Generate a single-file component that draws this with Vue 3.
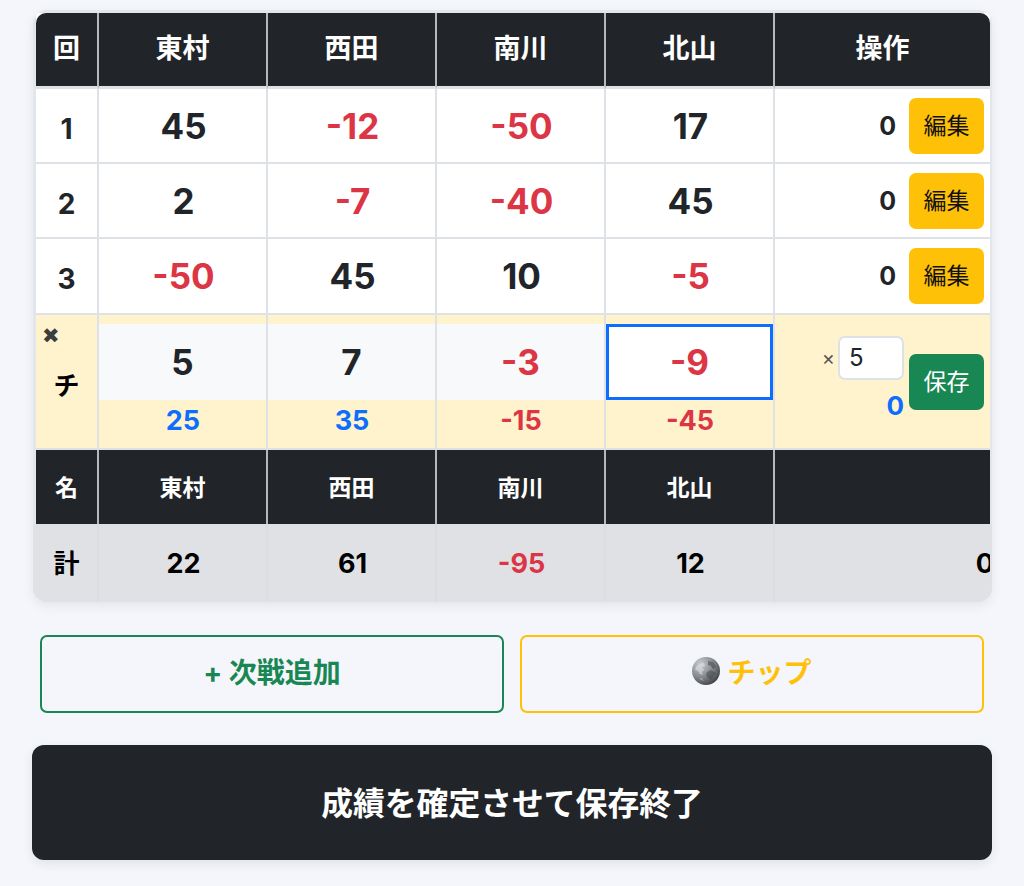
<script setup>
const players = ['東村', '西田', '南川', '北山']

const rounds = [
  { no: 1, scores: [45, -12, -50, 17], chip: 0 },
  { no: 2, scores: [2, -7, -40, 45], chip: 0 },
  { no: 3, scores: [-50, 45, 10, -5], chip: 0 },
]

const chips = [
  { value: 5, amount: 25 },
  { value: 7, amount: 35 },
  { value: -3, amount: -15 },
  { value: -9, amount: -45, active: true },
]

const totals = [22, 61, -95, 12]
</script>

<template>
  <div class="page">
    <div class="score-card">
      <table class="score-table">
        <colgroup>
          <col class="col-round" />
          <col v-for="p in players" :key="p" class="col-player" />
          <col class="col-ops" />
        </colgroup>
        <thead>
          <tr>
            <th class="head-main">回</th>
            <th v-for="p in players" :key="p" class="head-main">{{ p }}</th>
            <th class="head-main">操作</th>
          </tr>
        </thead>
        <tbody>
          <tr v-for="r in rounds" :key="r.no" class="round-row">
            <td class="round-no">{{ r.no }}</td>
            <td v-for="(s, i) in r.scores" :key="i" class="score" :class="{ minus: s < 0 }">{{ s }}</td>
            <td class="ops">
              <div class="ops-inner">
                <span class="ops-chip">{{ r.chip }}</span>
                <button class="btn-edit">編集</button>
              </div>
            </td>
          </tr>

          <tr class="chip-row">
            <td class="chip-label">
              <span class="chip-x">✖</span>
              <span class="chip-name">チ</span>
            </td>
            <td v-for="(c, i) in chips" :key="i" class="chip-cell">
              <input
                class="chip-input"
                :class="{ active: c.active, minus: c.value < 0 }"
                type="text"
                :value="c.value"
              />
              <div class="chip-amount" :class="{ minus: c.amount < 0 }">{{ c.amount }}</div>
            </td>
            <td class="ops">
              <div class="ops-inner">
                <div class="rate">
                  <div class="rate-line">
                    <span class="rate-x">×</span>
                    <input class="rate-input" type="text" value="5" />
                  </div>
                  <div class="rate-sum">0</div>
                </div>
                <button class="btn-save">保存</button>
              </div>
            </td>
          </tr>

          <tr>
            <th class="head-sub">名</th>
            <th v-for="p in players" :key="p" class="head-sub">{{ p }}</th>
            <th class="head-sub"></th>
          </tr>

          <tr class="total-row">
            <td class="total-label">計</td>
            <td v-for="(t, i) in totals" :key="i" class="total" :class="{ minus: t < 0 }">{{ t }}</td>
            <td class="total total-ops"><span class="total-zero">0</span></td>
          </tr>
        </tbody>
      </table>
    </div>

    <div class="actions">
      <button class="btn-outline green">+ 次戦追加</button>
      <button class="btn-outline yellow">
        <svg class="coin" viewBox="0 0 28 28" aria-hidden="true">
          <defs>
            <radialGradient id="coinFill" cx="30%" cy="25%" r="85%">
              <stop offset="0" stop-color="#c9cdcf" />
              <stop offset="0.55" stop-color="#85898c" />
              <stop offset="1" stop-color="#3a3d40" />
            </radialGradient>
          </defs>
          <circle cx="14" cy="14" r="14" fill="url(#coinFill)" />
          <path d="M4 10c2-2 5-4 8-4l1 3-3 1 2 3-2 2 1 3-3-1-2-3-3-1z" fill="#e4e6e8" opacity=".55" />
          <path d="M16 4l5 1 3 5-3 2-2-3-3-1zM15 15l4-2 5 3-3 3-1 4-4-2-2-3z" fill="#44484b" opacity=".55" />
          <path d="M7 21l3 0 2 3-3-1z" fill="#bfc3c5" opacity=".5" />
        </svg>
        <span>チップ</span>
      </button>
    </div>

    <button class="btn-finish">成績を確定させて保存終了</button>
  </div>
</template>

<style>
html,
body {
  margin: 0;
  background: #f4f6fb;
}
</style>

<style scoped>
.page {
  padding: 10px 32px 26px;
  font-family: Inter, "Noto Sans CJK JP", sans-serif;
  color: #212529;
  box-sizing: border-box;
  min-height: 886px;
}

.score-card {
  margin-left: 1px;
  padding: 3px 2px 0 3px;
  background: #e3e6eb;
  border-radius: 14px;
  overflow: hidden;
  box-shadow: 0 4px 12px rgba(0, 0, 0, 0.07);
}

.score-table {
  width: 954px;
  table-layout: fixed;
  border-collapse: separate;
  border-spacing: 0;
  background: #fff;
}

.col-round { width: 63px; }
.col-player { width: 169px; }
.col-ops { width: 215px; }

th,
td {
  box-sizing: border-box;
  padding: 0;
  text-align: center;
  border-right: 2px solid #dee2e6;
  border-bottom: 2px solid #dee2e6;
}

th:last-child,
td:last-child {
  border-right: 0;
}

.head-main,
.head-sub {
  background: #212529;
  color: #fff;
  font-weight: 700;
  border-right-color: #b6b8bb;
}

.head-main {
  height: 76px;
  padding-bottom: 6px;
  font-size: 27px;
  border-bottom-width: 3px;
}

.head-main:first-child {
  border-top-left-radius: 10px;
}

.head-main:last-child {
  border-top-right-radius: 10px;
}

.head-sub {
  height: 74px;
  padding-bottom: 2px;
  font-size: 23px;
  border-bottom: 0;
}

.round-row td {
  height: 75px;
}

.round-row:nth-child(3) td {
  height: 76px;
}

.round-no {
  font-size: 28px;
  font-weight: 700;
  padding-top: 6px;
}

.score {
  padding-left: 2px;
  font-size: 35px;
  font-weight: 700;
}

.minus {
  color: #dc3545;
}

.ops {
  padding-right: 6px;
}

.ops-inner {
  display: flex;
  align-items: center;
  justify-content: flex-end;
}

.ops-chip {
  margin-right: 13px;
  font-size: 25px;
  font-weight: 700;
}

.btn-edit,
.btn-save {
  width: 75px;
  height: 56px;
  padding: 0 0 4px;
  border: 0;
  border-radius: 7px;
  font-family: inherit;
  font-size: 23px;
}

.btn-edit {
  background: #ffc107;
  color: #111;
}

.btn-save {
  margin-left: 5px;
  background: #198754;
  color: #fff;
}

.chip-row td {
  height: 135px;
  background: #fff3cd;
}

.chip-label {
  position: relative;
  vertical-align: middle;
  padding-top: 4px;
}

.chip-x {
  position: absolute;
  top: 10px;
  left: 6px;
  font-size: 21px;
  line-height: 1;
  color: #3d3d3d;
}

.chip-name {
  font-size: 26px;
  font-weight: 700;
  color: #000;
}

.chip-cell {
  vertical-align: top;
  padding-top: 9px;
}

.chip-input {
  display: block;
  box-sizing: border-box;
  width: 100%;
  height: 76px;
  border: 3px solid #f8f9fa;
  border-radius: 0;
  outline: none;
  background: #f8f9fa;
  color: #212529;
  font-family: inherit;
  font-size: 35px;
  font-weight: 700;
  text-align: center;
}

.chip-input.minus {
  color: #dc3545;
}

.chip-input.active {
  background: #fff;
  border-color: #0d6efd;
}

.chip-amount {
  margin-top: 1px;
  padding-left: 1px;
  font-size: 27px;
  font-weight: 700;
  line-height: 40px;
  color: #0d6efd;
}

.chip-amount.minus {
  color: #dc3545;
}

.rate {
  display: flex;
  flex-direction: column;
  align-items: flex-end;
}

.rate-line {
  display: flex;
  align-items: center;
  gap: 3px;
}

.rate-x {
  font-size: 20px;
  color: #555;
}

.rate-input {
  box-sizing: border-box;
  width: 66px;
  height: 44px;
  padding: 0 9px;
  border: 2px solid #dee2e6;
  border-radius: 7px;
  outline: none;
  background: #fff;
  color: #212529;
  font-family: inherit;
  font-size: 24px;
}

.rate-sum {
  margin-top: 4px;
  font-size: 26px;
  font-weight: 700;
  line-height: 44px;
  color: #0d6efd;
}

.total-row td {
  height: 78px;
  background: #e0e1e4;
  border-bottom: 0;
  border-right-color: #dbdde1;
}

.total-label {
  padding-bottom: 4px;
  font-size: 26px;
  font-weight: 700;
  color: #000;
  box-shadow: -3px 0 0 #e0e1e4;
}

.total {
  padding-left: 2px;
  font-size: 27px;
  font-weight: 700;
  color: #000;
}

.total.minus {
  color: #dc3545;
}

.total-ops {
  overflow: hidden;
  text-align: right;
  box-shadow: 2px 0 0 #e0e1e4;
}

.total-zero {
  display: inline-block;
  margin-right: -4px;
}

.actions {
  display: grid;
  grid-template-columns: 1fr 1fr;
  gap: 16px;
  margin-top: 33px;
  padding: 0 8px;
}

.btn-outline {
  display: flex;
  align-items: center;
  justify-content: center;
  gap: 7px;
  height: 78px;
  padding: 0 0 6px;
  border: 2px solid;
  border-radius: 7px;
  background: transparent;
  font-family: inherit;
  font-size: 28px;
  font-weight: 700;
}

.btn-outline.green {
  border-color: #198754;
  color: #198754;
}

.btn-outline.yellow {
  border-color: #ffc107;
  color: #ffc107;
}

.coin {
  width: 28px;
  height: 28px;
}

.btn-finish {
  display: block;
  width: 100%;
  height: 115px;
  margin-top: 32px;
  padding: 0 0 4px;
  border: 0;
  border-radius: 12px;
  background: #212529;
  color: #fff;
  font-family: inherit;
  font-size: 31.8px;
  font-weight: 700;
  box-shadow: 0 4px 12px rgba(0, 0, 0, 0.08);
}
</style>
